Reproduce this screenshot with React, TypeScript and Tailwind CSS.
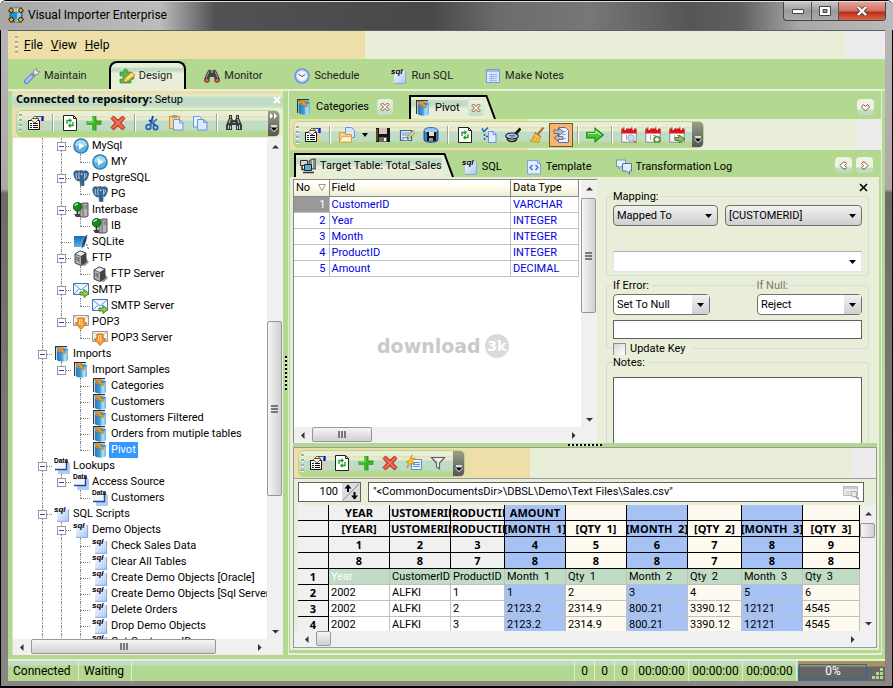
import { useId, useState, type ReactNode } from 'react'
import clsx from 'clsx'

/* ---------- icons ---------- */

function Svg({ children, size = 16 }: { children: ReactNode; size?: number }) {
  return (
    <svg width={size} height={size} viewBox="0 0 16 16" fill="none" className="shrink-0" aria-hidden="true">
      {children}
    </svg>
  )
}

const AppIcon = () => (
  <Svg>
    <path d="M2 3v10c0 3 12 3 12 0V3z" fill="#2490cc" stroke="#0d4d78" strokeWidth=".8" />
    <path d="M9 4h4v10l-4 1z" fill="#8ed2f0" />
    <ellipse cx="8" cy="3" rx="6" ry="2.200" fill="#b9e6f8" stroke="#0d4d78" strokeWidth=".6" />
    <path d="M3 .5L5.500 3 4 6 .5 4zM13 .5L10.500 3 12 6l3.500-2zM.5 12L4 10l2 3-3 2.500zM15.500 12L12 10l-2 3 3 2.500z" fill="#f3a024" stroke="#111" strokeWidth=".9" />
    <path d="M8 1v4M8 12v4" stroke="#f3a024" strokeWidth="1.600" />
  </Svg>
)
const WrenchIcon = () => (
  <Svg>
    <path d="M2.500 13.500l6-6" stroke="#5f86d8" strokeWidth="5" strokeLinecap="round" />
    <path d="M2.700 13.300l5.500-5.500" stroke="#a9c4f5" strokeWidth="3" strokeLinecap="round" />
    <path d="M8 8l3-3" stroke="#8c8f96" strokeWidth="2.400" />
    <path d="M9.500 6V2.600L12.600.6l.2 2.600 2.800.3-2 3-3.200.4z" fill="#e4e6ea" stroke="#7c8088" strokeWidth=".8" />
  </Svg>
)
const DesignIcon = () => (
  <Svg>
    <path d="M1 4h4c-1-2 0-3 1.500-3S9 2 8 4h4v4c2-1 3 0 3 1.500s-1 2.500-3 1.500v4H1v-4c2 1 3-.5 3-1.500S3 7 1 8z" fill="#56b843" stroke="#2f8a2b" strokeWidth=".7" />
    <path d="M5 14l1-4 7-6 3 3-7 6z" fill="#fbd162" stroke="#c9821b" strokeWidth=".8" />
    <path d="M5 14l1-4 2.600 3z" fill="#fff3d0" stroke="#c9821b" strokeWidth=".6" />
    <path d="M7.500 11l6-5.200" stroke="#fff0b4" />
  </Svg>
)
const MonitorIcon = () => (
  <Svg>
    <path d="M4 2.500L6 1.500l1.500 1V5h1V2.500l1.500-1 2 1L15.500 10v3l-4 1-1.500-5h-4L4.500 14l-4-1v-3z" fill="#434345" />
    <path d="M5 3.500l-3 7M11 3.500l3 7" stroke="#97979a" />
    <ellipse cx="3" cy="12.500" rx="2.400" ry="2" fill="#e23a32" stroke="#333" strokeWidth=".6" />
    <ellipse cx="13" cy="12.500" rx="2.400" ry="2" fill="#e23a32" stroke="#333" strokeWidth=".6" />
    <path d="M2 12h1.500M12.500 12H14" stroke="#ffb0a8" />
  </Svg>
)
const ClockIcon = () => (
  <Svg>
    <circle cx="8" cy="8" r="6.800" fill="#fff" stroke="#6d97e8" strokeWidth="2" />
    <circle cx="8" cy="8" r="5" fill="#f3f6fb" stroke="#c3d3f2" strokeWidth=".8" />
    <path d="M4.500 6.200L8 8.500l3.200-2" stroke="#555" />
  </Svg>
)
const SqlIcon = () => (
  <Svg>
    <defs>
      <linearGradient id="sqlPage" x1="0" y1="0" x2="1" y2="1">
        <stop offset="0" stopColor="#f6faff" />
        <stop offset="1" stopColor="#a9c6f2" />
      </linearGradient>
    </defs>
    <path d="M3 3h12v12.500H3z" fill="url(#sqlPage)" />
    <path d="M14.600 3v12.400H3" stroke="#7f9ccc" strokeWidth=".8" />
    <text x="0" y="5.500" fontSize="8" fontWeight="700" fontStyle="italic" fill="#000" fontFamily="'Liberation Sans', sans-serif">sql</text>
  </Svg>
)
const NotesIcon = () => (
  <Svg>
    <path d="M1.500 1.500h13v13h-13z" fill="#dbe8fb" stroke="#6f9be0" />
    <path d="M2 2h12v2H2z" fill="#9dbdf0" />
    <path d="M4 6.500h8M4 8.500h8M4 10.500h8M4 12.500h8M6.500 5v9" stroke="#9ab9ea" />
  </Svg>
)
const ImportIcon = () => (
  <Svg>
    <defs>
      <linearGradient id="drum" x1="0" y1="0" x2="1" y2="0">
        <stop offset="0" stopColor="#2679bd" />
        <stop offset=".45" stopColor="#3f9ed8" />
        <stop offset=".7" stopColor="#b4e2f6" />
        <stop offset="1" stopColor="#6cb8e2" />
      </linearGradient>
    </defs>
    <path d="M1.600 14V.6H13" stroke="#333" strokeWidth="1.200" />
    <path d="M3 4v10c1 2.200 10 2.200 11 0V4z" fill="url(#drum)" />
    <ellipse cx="8.500" cy="3.800" rx="5.600" ry="1.900" fill="#3b8fcb" stroke="#8fd0ee" strokeWidth=".6" />
    <path d="M3 1.500l3.500.5L8 1.500 9.500 4l2 3-1.500 1-1.500-1.500H6.500L7 5 4.500 4z" fill="#f59a1e" stroke="#a85808" strokeWidth=".5" />
  </Svg>
)
const PropsIcon = () => (
  <Svg>
    <path d="M.5 5.500h11v9H.5z" fill="#fff" stroke="#111" />
    <path d="M2 8.500h2M2 10.500h2M2 12.500h2M5 8.500h5M5 10.500h5M5 12.500h5" stroke="#111" />
    <path d="M3 5l4-4 4 3-4 4z" fill="#f7efd0" stroke="#444" strokeWidth=".8" />
    <path d="M8 1.500h5M5 3.500h5" stroke="#555" />
    <path d="M14.500 1v5" stroke="#1818d8" strokeWidth="2.400" />
    <path d="M13.500 7v7" stroke="#f0c890" strokeWidth="2.200" />
  </Svg>
)
const RefreshIcon = () => (
  <Svg>
    <path d="M1.500.5h10l3 3v12h-13z" fill="#fff" stroke="#222" />
    <path d="M11.500.5v3h3" stroke="#222" />
    <path d="M5 9V5.500h3M11 7v3.500H8" stroke="#159a1e" strokeWidth="1.300" />
    <path d="M7.500 3v5L10 5.500zM8.500 8v5L6 10.500z" fill="#159a1e" />
  </Svg>
)
const PlusIcon = () => (
  <Svg>
    <path d="M6 1h4v5h5.500v4H10v5.500H6V10H.5V6H6z" fill="#41b329" />
    <path d="M7 2v5H1.500" stroke="#8fe070" />
    <path d="M10 1.500V6h5.500M10 10v5.500" stroke="#1e7e14" strokeWidth=".8" />
  </Svg>
)
const CrossIcon = () => (
  <Svg>
    <path d="M1 3.500L3.500 1 8 5l4.500-4L15 3.500 11 8l4 4.500-2.500 2.500L8 11l-4.500 4L1 12.500 5 8z" fill="#e2553f" stroke="#b12e1c" strokeWidth=".9" />
    <path d="M3 3l10 10M13 3L3 13" stroke="#f08f7c" strokeWidth=".8" />
  </Svg>
)
const CutIcon = () => (
  <Svg>
    <path d="M9 1L6.500 10M5 5l7 6" stroke="#174f9e" strokeWidth="2" />
    <path d="M13 4L6 10" stroke="#3b78c6" strokeWidth="2" />
    <circle cx="4.500" cy="12" r="2.300" stroke="#2463b8" strokeWidth="1.800" />
    <circle cx="11.500" cy="12.500" r="2.200" stroke="#2463b8" strokeWidth="1.800" />
  </Svg>
)
const PasteIcon = () => (
  <Svg>
    <path d="M1.500 1.500h10v12h-10z" fill="#f8d48a" stroke="#d29335" />
    <path d="M4 0h5v3H4z" fill="#b9a06a" />
    <path d="M5.500 4.500h6L15 7.500v7.500H5.500z" fill="#e4efff" stroke="#6a94dc" />
    <path d="M11.500 4.500V8H15" stroke="#6a94dc" />
  </Svg>
)
const CopyIcon = () => (
  <Svg>
    <path d="M1.500 1.500h6l2.500 2.500v8H1.500z" fill="#edf4ff" stroke="#6a94dc" />
    <path d="M5.500 4.500h6L15 7v8H5.500z" fill="#dce9ff" stroke="#6a94dc" />
    <path d="M11.500 4.500v3H15" stroke="#6a94dc" />
  </Svg>
)
const FindIcon = () => (
  <Svg>
    <path d="M3 0h3v3l1 2h2l1-2V0h3v3l3 7v5h-6v-5H6v5H0v-5l3-7z" fill="#3c3c3c" />
    <path d="M2.500 10v4M4.500 11v3M11.500 11v3M13.500 10v4M4.500 4L3 8M11.500 4L13 8" stroke="#c8c8c8" />
    <path d="M4.500 1v2M11.500 1v2M7 7.500h2" stroke="#aaa" />
  </Svg>
)
const OpenIcon = () => (
  <Svg>
    <path d="M6.500.5h6l3 3v7h-9z" fill="#d8e7fd" stroke="#6a94dc" />
    <path d="M.5 5.500h5l1 2h6v7.500H.5z" fill="#f8cf86" stroke="#dc9a3c" />
    <path d="M3 9.500h9.500V15H.5z" fill="#fff2d4" stroke="#dc9a3c" strokeWidth=".8" />
  </Svg>
)
const SaveIcon = () => (
  <Svg>
    <path d="M1 1h14v14H1z" fill="#151515" />
    <path d="M4 1h8v6H4z" fill="#d8c8b8" />
    <path d="M2 2v12" stroke="#a07c28" />
    <path d="M4 10h8v5H4z" fill="#6a6a6a" />
    <path d="M9 11h2v3H9z" fill="#fff" />
  </Svg>
)
const SaveAsIcon = () => (
  <Svg>
    <path d="M1.500 3.500h11v10h-11z" fill="#e2ecf8" stroke="#3b6496" strokeWidth="1.200" />
    <path d="M3 6h8M3 8h6M4 10.500h5v3H4z" stroke="#6b90bc" />
    <path d="M8 12l1-3 5-5.500 2 2-5.500 5.500z" fill="#fbdc74" stroke="#6c6c38" strokeWidth=".8" />
  </Svg>
)
const SaveDbIcon = () => (
  <Svg>
    <path d="M1 4v9c0 3 14 3 14 0V4z" fill="#3c7fd0" stroke="#143c78" strokeWidth=".8" />
    <ellipse cx="8" cy="3.500" rx="7" ry="3" fill="#9cc6f4" stroke="#1d5298" strokeWidth=".8" />
    <path d="M4 5h9v9H4z" fill="#111" />
    <path d="M6 5h5v4H6z" fill="#e8dfc8" />
    <path d="M6 11h4v3H6z" fill="#999" />
  </Svg>
)
const ChecksIcon = () => (
  <Svg>
    <path d="M1 1.500l2 3 4-4M3.500 7v2M3.500 11v2M5 9.500h2" stroke="#1d5fc0" strokeWidth="1.500" />
    <path d="M7.500 4.500h5L15 7v8.500H7.500z" fill="#e0ebff" stroke="#6a94dc" />
    <path d="M12 4.500v3h3" stroke="#6a94dc" />
  </Svg>
)
const PanIcon = () => (
  <Svg>
    <path d="M10 7.500l5.500-6" stroke="#111" strokeWidth="2.600" />
    <ellipse cx="7" cy="9" rx="6.300" ry="3" fill="#b9c6e8" stroke="#222" strokeWidth="1.200" />
    <path d="M2 11.500c1 4 9 4 10 0" stroke="#222" strokeWidth="1.400" />
    <path d="M4 8.500h6M5 10h5" stroke="#5a6eb0" />
  </Svg>
)
const BroomIcon = () => (
  <Svg>
    <path d="M14.500.5L9 7" stroke="#b06a2c" strokeWidth="2" />
    <path d="M6 5.500l5.500 4-2 6L1 14c2-2 4.500-5 5-8.500z" fill="#f8ca4c" stroke="#bd821c" strokeWidth=".8" />
    <path d="M6.500 9l-3 4.500M8.500 10l-2 4.500" stroke="#c98e20" strokeWidth=".8" />
    <path d="M6 5.500l5.500 4" stroke="#c8402a" />
  </Svg>
)
const PageArrowsIcon = () => (
  <Svg>
    <path d="M5.500.5h7l3 3v12h-10z" fill="#e8f1fd" stroke="#4a79b6" />
    <path d="M8 4.500h5M9 7.500h4M8 11.500h5" stroke="#87a8d6" />
    <path d="M1 3h5V1l4.500 4L6 8.500V6.500H1z" fill="#b7bcc8" stroke="#58606e" strokeWidth=".8" />
    <path d="M10 9.500H5V8L1 11l4 3v-1.500h5z" fill="#b7bcc8" stroke="#58606e" strokeWidth=".8" />
  </Svg>
)
const GoIcon = () => (
  <Svg size={18}>
    <path d="M.6 5.500h7.400V2L15.400 8 8 14v-3.500H.6z" fill="#4cc433" stroke="#1c8a16" />
    <path d="M1.500 6.700h7.300V4.500l4.300 3.500" stroke="#b2f09a" />
  </Svg>
)
function CalendarIcon({ badge }: { badge: 'find' | 'add' | 'go' }) {
  return (
    <Svg>
      <path d="M.8 2.500h14.400v12.700H.8z" fill="#fafafa" stroke="#777" strokeWidth=".8" />
      <path d="M.5 1.500h15v5H.5z" fill="#e0121c" />
      <path d="M4 0v3M12 0v3" stroke="#fff" strokeWidth="2" />
      <path d="M3 0v3M11 0v3" stroke="#333" strokeWidth=".8" />
      <path d="M5.500 8v5M8 8.500h2.500L8.500 13" stroke="#aaa" />
      {badge === 'find' && (
        <>
          <circle cx="10" cy="11" r="3.200" fill="#c5def8" stroke="#8fb0d8" />
          <path d="M12.500 13.500l3 2.500" stroke="#b06a4a" strokeWidth="1.600" />
        </>
      )}
      {badge === 'add' && (
        <>
          <circle cx="12" cy="12.500" r="3.300" fill="#6aab4a" stroke="#4c7f32" strokeWidth=".8" />
          <path d="M12 10.500v4M10 12.500h4" stroke="#fff" strokeWidth="1.300" />
        </>
      )}
      {badge === 'go' && <path d="M6 10.500h4V8l6 4-6 4v-2.500H6z" fill="#86c060" stroke="#3d7a22" strokeWidth=".9" />}
    </Svg>
  )
}
const QuickListIcon = () => (
  <Svg>
    <path d="M5.500 4.500h10v10h-10z" fill="#e9f2ff" stroke="#5e8fc8" />
    <path d="M7 7.500h7M7 9.500h7M7 11.500h7" stroke="#5e8fc8" strokeWidth="1.200" />
    <path d="M6 0L5 4l4-1-3 4 3 2-4-.5L1 13l1.500-5L0 7l3-1z" fill="#ffc832" stroke="#c78410" strokeWidth=".7" />
  </Svg>
)
const FilterIcon = () => (
  <Svg>
    <path d="M1.500 2.500h13L9.500 8v6l-3-2V8z" fill="#f0f2f2" stroke="#5a5f66" strokeWidth="1.200" />
    <path d="M4 3.500l4 4" stroke="#c0c4c8" />
  </Svg>
)
const TargetIcon = () => (
  <Svg>
    <path d="M.5 2.500h7v5h-7z" fill="#d5d5d5" stroke="#333" />
    <path d="M9 3l3-2h4v10h-4l-3-1z" fill="#8f8f8f" stroke="#333" strokeWidth=".8" />
    <path d="M12.500 2v8" stroke="#ddd" />
    <path d="M4.500 6.500h7v6h-7z" fill="#5cb0d8" stroke="#222" />
    <path d="M2 8v3.500h2M3 14.500h11" stroke="#333" strokeWidth="1.500" />
  </Svg>
)
const TemplateIcon = () => (
  <Svg>
    <path d="M1.500 1.500h10l3 3v10.500h-13z" fill="#e2eefd" stroke="#7aa5e4" />
    <path d="M11.500 1.500v3h3" stroke="#7aa5e4" />
    <path d="M6.500 6L4 8.500 6.500 11M9.500 6L12 8.500 9.500 11" stroke="#2f74cc" strokeWidth="1.300" />
  </Svg>
)
const LogIcon = () => (
  <Svg>
    <path d="M.5 1h9v6.500H5L3 10V7.500H.5z" fill="#eef4fe" stroke="#6f8fc8" />
    <path d="M6.500 4.500h9V12h-2v3.200L10.500 12h-4z" fill="#dfeafc" stroke="#4f74b8" />
  </Svg>
)
const MySqlIcon = () => (
  <Svg>
    <circle cx="8" cy="8" r="7.800" fill="#2c7db2" />
    <circle cx="8" cy="8" r="6.400" fill="#62b0dc" />
    <path d="M2 7.500a6 5.500 0 0112 0c-3 1.500-9 1.500-12 0z" fill="#a8d8f0" />
    <path d="M6 4.500v7L11.500 8z" fill="#fff" />
  </Svg>
)
const PostgresIcon = () => (
  <Svg>
    <path d="M.8 3C1.500-.2 5 .6 6 1.200c1.500-1 3-.7 4 0 2-1 5-.7 5.500 1.800.3 2.500-1 5-2.500 7.500l-2-.5v5.500H7.500L7 10.500C4 12.500.5 7.500.8 3z" fill="#336590" stroke="#1f4a70" strokeWidth=".6" />
    <path d="M3.500 3c-1 2.500 0 5 .8 6M6.500 2.500c-1.500 2-.5 4-.2 6.500M11 3c1.500 2 0 4 .3 6M13 3.500c1 1.500 0 3-.5 4" stroke="#e2edf6" strokeWidth=".8" />
    <circle cx="8.700" cy="4.200" r=".8" fill="#fff" />
  </Svg>
)
const InterbaseIcon = () => (
  <Svg>
    <path d="M7 2l3-1h5v13l-2 1H7z" fill="#b4b4b4" stroke="#333" strokeWidth=".8" />
    <path d="M10 1.500V15M11.500 4h3M11.500 6h3" stroke="#666" />
    <path d="M1 12h6v3H3z" fill="#444" />
    <path d="M4.500 8v5" stroke="#333" strokeWidth="1.600" />
    <circle cx="4.500" cy="4.800" r="4.300" fill="#128a1c" stroke="#06420c" strokeWidth=".8" />
    <path d="M2 4a2.500 2.500 0 013-2" stroke="#b8f0a8" strokeWidth="1.500" />
  </Svg>
)
const SqliteIcon = () => (
  <Svg>
    <defs>
      <linearGradient id="sqlite" x1="0" y1="0" x2="0" y2="1">
        <stop offset="0" stopColor="#0f6db4" />
        <stop offset="1" stopColor="#5cb2ea" />
      </linearGradient>
    </defs>
    <path d="M1 2h11v11H1z" fill="url(#sqlite)" />
    <path d="M14.500.5C11 2 8.500 7 8.500 15.500c1.500-3 5-4.500 6-15z" fill="#173f66" stroke="#e8f2fa" strokeWidth=".5" />
    <path d="M13 10l1.500 2M14.500 13l1 2" stroke="#35608a" />
  </Svg>
)
const FtpIcon = () => (
  <Svg>
    <path d="M10 4l6 8-4 4-4-1z" fill="#999" />
    <path d="M2 4l5-3 6 2v9l-5 3.500L2 13z" fill="#b2b2b2" stroke="#222" strokeWidth=".8" />
    <path d="M2 4l6 2.500L13 3 7 1z" fill="#ececec" stroke="#222" strokeWidth=".6" />
    <path d="M8 6.500l5-3.500v9l-5 3.500z" fill="#444" />
    <path d="M3.500 7.500l3 1M3.500 9.500l3 1" stroke="#444" />
    <path d="M6 11.500v1" stroke="#e02020" />
  </Svg>
)
const SmtpIcon = () => (
  <Svg>
    <path d="M.5 1.500h15v11H.5z" fill="#eff6ff" stroke="#3e78b8" />
    <path d="M1 2l7 6 7-6M1 12l5-5M15 12l-5-5" stroke="#5f97d2" />
    <path d="M7 10h4V7.500l5 4-5 4V13H7z" fill="#8ccc5a" stroke="#3b7e1c" strokeWidth=".9" />
  </Svg>
)
const Pop3Icon = () => (
  <Svg>
    <path d="M.5 1.500h15v10H.5z" fill="#f5f2ec" stroke="#999" />
    <path d="M1 2l5 4M15 2l-5 4M1 11l4-4M15 11l-4-4" stroke="#bbb" />
    <path d="M5 4h6v5h3l-6 6.500L2 9h3z" fill="#f8a030" stroke="#c86a10" strokeWidth=".9" />
    <path d="M6.500 5v5M8.500 5v6" stroke="#ffd08a" />
  </Svg>
)
const LookupIcon = () => (
  <Svg>
    <path d="M4 5h12v11H4z" fill="#b4ccf2" />
    <path d="M1 3h11.500v8H1z" fill="#f2f7ff" />
    <path d="M1 11.500h11.500V3" stroke="#20489c" strokeWidth="1.400" />
    <text x="0" y="5" fontSize="6.500" fontWeight="700" fill="#000" fontFamily="'Liberation Sans', sans-serif">Data</text>
  </Svg>
)
const BrowseIcon = () => (
  <Svg>
    <path d="M.5 2.500h14v9H.5z" fill="#eee" stroke="#b8b8b8" />
    <path d="M1 3h13v2H1z" fill="#ccc" />
    <path d="M2.500 7.500h6M2.500 9.500h4" stroke="#c4c4c4" />
    <circle cx="11" cy="10" r="3" fill="#e8e8e8" stroke="#aaa" />
    <path d="M13 12.500l3 3" stroke="#999" strokeWidth="1.800" />
  </Svg>
)

/* ---------- toolbars ---------- */

const stripe =
  'bg-[linear-gradient(#e8eed8_0,#e8eed8_5px,#eedfa8_5px,#eedfa8_6px,#e4ecd4_7px,#e0ead2_9px,#c1dcc4_10px,#c1dcc4_18px,#b3d88f_21px)]'

const boldFont = "[font-family:'Noto_Sans',sans-serif]"

const Grip = () => (
  <span className="h-[18px] w-[3px] shrink-0 bg-[repeating-linear-gradient(#a8ac9c_0,#a8ac9c_2px,#f4f6ec_2px,#f4f6ec_3px,transparent_3px,transparent_5px)]" />
)

const Sep = () => (
  <span className="flex w-2.5 shrink-0 justify-center">
    <span className="h-[18px] w-0.5 border-l border-[#9aa890] bg-white" />
  </span>
)

function ToolButton({ label, active, children }: { label: string; active?: boolean; children: ReactNode }) {
  return (
    <button
      type="button"
      title={label}
      aria-label={label}
      className={clsx(
        'flex h-6 w-6 shrink-0 items-center justify-center',
        active && 'border border-[#6a5a3c] bg-[#fbb46a]',
      )}
    >
      {children}
    </button>
  )
}

function Toolbar({ children, wide, double }: { children: ReactNode; wide?: boolean; double?: boolean }) {
  return (
    <div
      className={clsx(
        'flex h-[27px] items-center rounded-md border border-[#b3d88f] pl-0.5',
        stripe,
        wide && 'min-w-0 flex-1',
      )}
    >
      <Grip />
      <div className={clsx('flex items-center pl-0.5', wide && 'flex-1')}>{children}</div>
      <button
        type="button"
        aria-label="Toolbar options"
        className="ml-[3px] flex h-[25px] w-[11px] flex-col items-center justify-end rounded-r bg-gradient-to-b from-[#9aa088] to-[#555] pb-1"
      >
        {double && (
          <svg width="8" height="6" viewBox="0 0 8 6" className="mb-1.5" aria-hidden="true">
            <path d="M0 0l3 3-3 3zM4 0l3 3-3 3z" fill="#fff" />
          </svg>
        )}
        <svg width="8" height="7" viewBox="0 0 8 7" aria-hidden="true">
          <path d="M1 1h6" stroke="#fff" strokeWidth="1.500" />
          <path d="M0 3h8L4 7z" fill="#fff" />
          <path d="M1 3h6L4 6z" fill="#000" />
        </svg>
      </button>
    </div>
  )
}

/* ---------- scroll bars ---------- */

type Dir = 'up' | 'down' | 'left' | 'right'

const arrowPaths: Record<Dir, string> = {
  up: 'M0 5.500L3.500 2 7 5.500z',
  down: 'M0 2l3.500 3.500L7 2z',
  left: 'M5.500 0L2 3.500 5.500 7z',
  right: 'M2 0l3.500 3.500L2 7z',
}

function ScrollArrow({ dir }: { dir: Dir }) {
  return (
    <button type="button" aria-label={`Scroll ${dir}`} className="flex h-4 w-4 shrink-0 items-center justify-center">
      <svg width="7" height="7" viewBox="0 0 7 7" aria-hidden="true">
        <path d={arrowPaths[dir]} fill="#333" />
      </svg>
    </button>
  )
}

function VScroll({ before, thumb, mark = true }: { before: string; thumb: string; mark?: boolean }) {
  return (
    <div className="flex w-4 shrink-0 flex-col bg-[#f0f0f0]">
      <ScrollArrow dir="up" />
      <div className="flex min-h-0 flex-1 flex-col">
        <div className={before} />
        <div
          className={clsx(
            'flex w-[15px] shrink-0 flex-col items-center justify-center gap-px rounded-xs border border-[#979797] bg-gradient-to-r from-[#f6f6f6] to-[#d0d0d2]',
            thumb,
          )}
        >
          {mark && (
            <>
              <span className="h-0.5 w-[7px] bg-[#777]" />
              <span className="h-0.5 w-[7px] bg-[#777]" />
              <span className="h-0.5 w-[7px] bg-[#777]" />
            </>
          )}
        </div>
      </div>
      <ScrollArrow dir="down" />
    </div>
  )
}

function HScroll({ before, thumb, mark = true }: { before: string; thumb: string; mark?: boolean }) {
  return (
    <div className="flex h-4 min-w-0 flex-1 bg-[#f0f0f0]">
      <ScrollArrow dir="left" />
      <div className="flex min-w-0 flex-1">
        <div className={before} />
        <div
          className={clsx(
            'flex h-[15px] shrink-0 items-center justify-center gap-px rounded-xs border border-[#979797] bg-gradient-to-b from-[#f6f6f6] to-[#d0d0d2]',
            thumb,
          )}
        >
          {mark && (
            <>
              <span className="h-[7px] w-0.5 bg-[#777]" />
              <span className="h-[7px] w-0.5 bg-[#777]" />
              <span className="h-[7px] w-0.5 bg-[#777]" />
            </>
          )}
        </div>
      </div>
      <ScrollArrow dir="right" />
    </div>
  )
}

/* ---------- repository tree ---------- */

type Node = { depth: number; label: string; icon: () => ReactNode; leaf?: boolean }

const nodes: Node[] = [
  { depth: 1, label: 'MySql', icon: MySqlIcon },
  { depth: 2, label: 'MY', icon: MySqlIcon, leaf: true },
  { depth: 1, label: 'PostgreSQL', icon: PostgresIcon },
  { depth: 2, label: 'PG', icon: PostgresIcon, leaf: true },
  { depth: 1, label: 'Interbase', icon: InterbaseIcon },
  { depth: 2, label: 'IB', icon: InterbaseIcon, leaf: true },
  { depth: 1, label: 'SQLite', icon: SqliteIcon, leaf: true },
  { depth: 1, label: 'FTP', icon: FtpIcon },
  { depth: 2, label: 'FTP Server', icon: FtpIcon, leaf: true },
  { depth: 1, label: 'SMTP', icon: SmtpIcon },
  { depth: 2, label: 'SMTP Server', icon: SmtpIcon, leaf: true },
  { depth: 1, label: 'POP3', icon: Pop3Icon },
  { depth: 2, label: 'POP3 Server', icon: Pop3Icon, leaf: true },
  { depth: 0, label: 'Imports', icon: ImportIcon },
  { depth: 1, label: 'Import Samples', icon: ImportIcon },
  { depth: 2, label: 'Categories', icon: ImportIcon, leaf: true },
  { depth: 2, label: 'Customers', icon: ImportIcon, leaf: true },
  { depth: 2, label: 'Customers Filtered', icon: ImportIcon, leaf: true },
  { depth: 2, label: 'Orders from mutiple tables', icon: ImportIcon, leaf: true },
  { depth: 2, label: 'Pivot', icon: ImportIcon, leaf: true },
  { depth: 0, label: 'Lookups', icon: LookupIcon },
  { depth: 1, label: 'Access Source', icon: LookupIcon },
  { depth: 2, label: 'Customers', icon: LookupIcon, leaf: true },
  { depth: 0, label: 'SQL Scripts', icon: SqlIcon },
  { depth: 1, label: 'Demo Objects', icon: SqlIcon },
  { depth: 2, label: 'Check Sales Data', icon: SqlIcon, leaf: true },
  { depth: 2, label: 'Clear All Tables', icon: SqlIcon, leaf: true },
  { depth: 2, label: 'Create Demo Objects [Oracle]', icon: SqlIcon, leaf: true },
  { depth: 2, label: 'Create Demo Objects [Sql Server]', icon: SqlIcon, leaf: true },
  { depth: 2, label: 'Delete Orders', icon: SqlIcon, leaf: true },
  { depth: 2, label: 'Drop Demo Objects', icon: SqlIcon, leaf: true },
  { depth: 2, label: 'Get Customer ID', icon: SqlIcon, leaf: true },
]

// true when another sibling at this depth follows further down
function continues(index: number, depth: number) {
  for (let j = index + 1; j < nodes.length; j++) {
    if (nodes[j].depth < depth) return false
    if (nodes[j].depth === depth) return true
  }
  return true
}

function Guide({ own, leaf, down }: { own: boolean; leaf?: boolean; down: boolean }) {
  return (
    <span className="grid h-4 w-[19px] shrink-0 grid-cols-[9px_10px] grid-rows-2">
      <span />
      <span className={clsx('border-dotted border-[#888]', (own || down) && 'border-l')} />
      <span />
      <span className={clsx('border-dotted border-[#888]', down && 'border-l', own && 'border-t')} />
      {own && !leaf && (
        <span className="col-span-2 -mt-3 ml-[5px] flex h-[9px] w-[9px] items-center justify-center border border-[#989898] bg-white">
          <span className="h-px w-[5px] bg-[#2a50b8]" />
        </span>
      )}
    </span>
  )
}

function Tree() {
  const [selected, setSelected] = useState('Pivot')
  return (
    <ul className="min-h-0 min-w-0 flex-1 overflow-hidden bg-white pl-5">
      {nodes.map((n, i) => {
        const Icon = n.icon
        return (
          <li key={i} className="flex h-4 items-center">
            {Array.from({ length: n.depth + 1 }, (_, c) => (
              <Guide key={c} own={c === n.depth} leaf={n.leaf} down={continues(i, c)} />
            ))}
            <button type="button" onClick={() => setSelected(n.label)} className="flex h-4 items-center whitespace-nowrap pl-0.5">
              <Icon />
              <span className={clsx('ml-px h-4 px-0.5 leading-4', selected === n.label && 'bg-[#3399ff] text-white')}>
                {n.label}
              </span>
            </button>
          </li>
        )
      })}
    </ul>
  )
}

function RepositoryPane() {
  return (
    <section className="flex w-[271px] shrink-0 flex-col border-l border-[#d8dcd0]">
      <header className="flex h-[17px] items-center justify-between bg-[linear-gradient(#eedfa8_0,#eedfa8_3px,#e2ecd4_4px,#c1dcc4_7px,#c1dcc4_14px,#d4e6c8_17px)] pl-[3px]">
        <span>
          <b className={boldFont}>Connected to repository:</b> Setup
        </span>
        <button type="button" aria-label="Close pane" className="flex h-3 w-3 items-center justify-center">
          <svg width="8" height="8" viewBox="0 0 8 8" aria-hidden="true">
            <path d="M1 1l6 6M7 1L1 7" stroke="#fff" strokeWidth="2" />
          </svg>
        </button>
      </header>
      <div className="flex h-[30px] items-center bg-[linear-gradient(90deg,#eedfa8_110px,#e8eed8_110px)] px-[3px]">
        <Toolbar wide double>
          <ToolButton label="Properties"><PropsIcon /></ToolButton>
          <Sep />
          <ToolButton label="Refresh"><RefreshIcon /></ToolButton>
          <ToolButton label="Add"><PlusIcon /></ToolButton>
          <ToolButton label="Delete"><CrossIcon /></ToolButton>
          <Sep />
          <ToolButton label="Cut"><CutIcon /></ToolButton>
          <ToolButton label="Paste"><PasteIcon /></ToolButton>
          <ToolButton label="Copy"><CopyIcon /></ToolButton>
          <Sep />
          <ToolButton label="Find"><FindIcon /></ToolButton>
        </Toolbar>
      </div>
      <div className="flex min-h-0 flex-1">
        <Tree />
        <VScroll before="h-[167px] shrink-0" thumb="h-[175px]" />
      </div>
      <div className="flex bg-[#f0f0f0] pr-4">
        <HScroll before="w-0.5" thumb="w-[185px]" />
      </div>
    </section>
  )
}

/* ---------- tabs ---------- */

// selected tab with a slanted right edge
function SlantTab({ children }: { children: ReactNode }) {
  return (
    <div className="flex h-6">
      <div className="flex items-center border-l-2 border-t-2 border-black bg-[linear-gradient(#e8eed8_2px,#c1dcc4_4px,#c1dcc4_8px,#e8eed8_12px)] pl-1">
        {children}
      </div>
      <svg width="12" height="24" viewBox="0 0 12 24" aria-hidden="true">
        <path d="M0 1h3l8 23H0z" fill="#e4ecd5" />
        <path d="M0 1h2.500l8.500 23" fill="none" stroke="#000" strokeWidth="2" />
      </svg>
    </div>
  )
}

function CloseTab({ label }: { label: string }) {
  return (
    <button
      type="button"
      aria-label={label}
      className="flex h-4 w-4 items-center justify-center rounded bg-gradient-to-b from-[#eef2e4] to-[#c1dcc4]"
    >
      <svg width="10" height="10" viewBox="0 0 10 10" aria-hidden="true">
        <path d="M1 2.500L2.500 1 5 3.500 7.500 1 9 2.500 6.500 5 9 7.500 7.500 9 5 6.500 2.500 9 1 7.500 3.500 5z" fill="#fff" stroke="#85511c" />
      </svg>
    </button>
  )
}

const mainTabs = [
  { label: 'Maintain', icon: WrenchIcon },
  { label: 'Design', icon: DesignIcon },
  { label: 'Monitor', icon: MonitorIcon },
  { label: 'Schedule', icon: ClockIcon },
  { label: 'Run SQL', icon: SqlIcon },
  { label: 'Make Notes', icon: NotesIcon },
]

function MainTabs() {
  const [tab, setTab] = useState('Design')
  return (
    <nav className="flex h-[30px] shrink-0 items-end pl-0.5">
      {mainTabs.map(({ label, icon: Icon }) => (
        <button
          key={label}
          type="button"
          onClick={() => setTab(label)}
          className={clsx(
            'mx-1 flex h-7 items-center gap-1 rounded-t-lg border-2 border-b-0 pl-2 pr-3',
            tab === label
              ? 'border-black bg-[linear-gradient(#e8eed8_4px,#c1dcc4_5px,#c1dcc4_8px,#e8eed8_10px)]'
              : 'border-transparent',
          )}
        >
          <Icon />
          <span className="whitespace-nowrap text-[#222]">{label}</span>
        </button>
      ))}
    </nav>
  )
}

/* ---------- target table + mapping form ---------- */

const fields = [
  ['CustomerID', 'VARCHAR'],
  ['Year', 'INTEGER'],
  ['Month', 'INTEGER'],
  ['ProductID', 'INTEGER'],
  ['Amount', 'DECIMAL'],
]

const headCell = 'h-4 border-b border-r border-[#888] bg-gradient-to-b from-white via-[#fffbe8] to-[#e8eed8] p-0 pl-0.5 text-left font-normal'

function FieldTable() {
  return (
    <table className="w-full table-fixed border-collapse leading-[15px]">
      <colgroup>
        <col className="w-[35px]" />
        <col />
        <col className="w-[68px]" />
      </colgroup>
      <thead>
        <tr>
          <th className={headCell}>
            <span className="flex items-center gap-2">
              No
              <svg width="8" height="7" viewBox="0 0 8 7" aria-hidden="true">
                <path d="M.5.5h7L4 6.500z" fill="#fff" stroke="#999" />
              </svg>
            </span>
          </th>
          <th className={headCell}>Field</th>
          <th className={headCell}>Data Type</th>
        </tr>
      </thead>
      <tbody className="text-[#0000e0]">
        {fields.map(([name, type], i) => (
          <tr key={name} className="h-4">
            <td className={clsx('border border-l-0 border-[#c0c0c0] p-0 pr-[3px] text-right', i === 0 && 'bg-[#999] text-white')}>
              {i + 1}
            </td>
            <td className="border border-[#c0c0c0] p-0 pl-0.5">{name}</td>
            <td className="border border-[#c0c0c0] p-0 pl-0.5">{type}</td>
          </tr>
        ))}
      </tbody>
    </table>
  )
}

type DropProps = { label: string; options: string[]; look: 'button' | 'split' | 'plain'; className: string; id?: string }

function Drop({ label, options, look, className, id }: DropProps) {
  return (
    <div className={clsx('relative h-[21px]', className)}>
      <select
        id={id}
        aria-label={id ? undefined : label}
        className={clsx(
          'h-full w-full appearance-none pl-[3px] pr-5 leading-4 outline-none',
          look === 'button' && 'rounded-sm border border-[#707070] bg-gradient-to-b from-[#f2f2f2] to-[#cfcfcf]',
          look === 'split' && 'rounded-sm border border-[#707070] bg-white',
          look === 'plain' && 'border border-[#e2e3ea] border-t-[#abadb3] bg-white',
        )}
      >
        {options.map((o) => (
          <option key={o}>{o}</option>
        ))}
      </select>
      <span
        className={clsx(
          'pointer-events-none absolute inset-y-px right-px flex w-[17px] items-center justify-center',
          look === 'split' && 'bg-gradient-to-b from-[#f2f2f2] to-[#cfcfcf]',
        )}
      >
        <svg width="7" height="4" viewBox="0 0 7 4" aria-hidden="true">
          <path d="M0 0h7L3.500 4z" fill="#000" />
        </svg>
      </span>
    </div>
  )
}

function MappingForm() {
  const id = useId()
  const group = 'rounded border border-[#d8dae2] px-1.5'
  const caption = 'bg-[#e8eed8] leading-4 pr-0.5'
  return (
    <form className="flex w-[280px] shrink-0 flex-col overflow-hidden bg-[#e8eed8] pl-[9px] pr-2">
      <div className="flex h-[17px] shrink-0 justify-end">
        <button type="button" aria-label="Close" className="flex h-4 w-3 items-center justify-center">
          <svg width="9" height="9" viewBox="0 0 9 9" aria-hidden="true">
            <path d="M1 1l7 7M8 1L1 8" stroke="#000" strokeWidth="1.600" />
          </svg>
        </button>
      </div>
      <div className={clsx(group, 'h-20 shrink-0')}>
        <div className="-mt-2 flex h-4">
          <span className={caption}>Mapping:</span>
        </div>
        <div className="flex justify-between">
          <Drop label="Mapping" look="button" className="w-[105px]" options={['Mapped To']} />
          <Drop label="Source column" look="button" className="w-[137px]" options={['[CUSTOMERID]']} />
        </div>
        <Drop label="Expression" look="plain" className="mt-[25px] w-full" options={['']} />
      </div>
      <div className={clsx(group, 'mt-[9px] h-16 shrink-0')}>
        <div className="-mt-2 flex h-4 justify-between">
          <label htmlFor={`${id}e`} className={caption}>If Error:</label>
          <label htmlFor={`${id}n`} className={clsx(caption, 'mr-[72px] text-[#777]')}>If Null:</label>
        </div>
        <div className="flex justify-between">
          <Drop id={`${id}e`} label="If Error" look="split" className="w-[97px]" options={['Set To Null']} />
          <Drop id={`${id}n`} label="If Null" look="split" className="w-[105px]" options={['Reject']} />
        </div>
        <input aria-label="Error value" className="mt-[5px] h-[19px] w-full border border-[#606060] bg-white px-1" />
        <div className="mt-0.5 flex h-4">
          <label className={clsx(caption, 'flex items-center gap-1 pr-2')}>
            <input type="checkbox" className="h-[13px] w-[13px] appearance-none border border-[#8e8f8f] bg-gradient-to-br from-[#d4d6da] to-white" />
            Update Key
          </label>
        </div>
      </div>
      <div className={clsx(group, 'mt-[13px] flex min-h-0 flex-1 flex-col rounded-b-none border-b-0')}>
        <div className="-mt-2 flex h-4 shrink-0">
          <label htmlFor={`${id}t`} className={caption}>Notes:</label>
        </div>
        <textarea id={`${id}t`} className="mt-1.5 min-h-0 flex-1 resize-none border border-b-0 border-[#606060] bg-white outline-none" />
      </div>
    </form>
  )
}

/* ---------- source file preview ---------- */

const columns = [
  { width: 'w-[61px]', tone: 'plain', head: ['YEAR', '[YEAR]', '1', '8'], rows: ['Year', '2002', '2002', '2002'] },
  { width: 'w-[61px]', tone: 'plain', head: ['CUSTOMERID', '[CUSTOMERID]', '2', '8'], rows: ['CustomerID', 'ALFKI', 'ALFKI', 'ALFKI'] },
  { width: 'w-[54px]', tone: 'plain', head: ['PRODUCTID', '[PRODUCTID]', '3', '7'], rows: ['ProductID', '1', '2', '3'] },
  { width: 'w-[61px]', tone: 'blue', head: ['AMOUNT', '[MONTH  1]', '4', '8'], rows: ['Month  1', '1', '2123.2', '2123.2'] },
  { width: 'w-[61px]', tone: 'cream', head: ['', '[QTY  1]', '5', '8'], rows: ['Qty  1', '2', '2314.9', '2314.9'] },
  { width: 'w-[61px]', tone: 'blue', head: ['', '[MONTH  2]', '6', '8'], rows: ['Month  2', '3', '800.21', '800.21'] },
  { width: 'w-[54px]', tone: 'cream', head: ['', '[QTY  2]', '7', '7'], rows: ['Qty  2', '4', '3390.12', '3390.12'] },
  { width: 'w-[61px]', tone: 'blue', head: ['', '[MONTH  3]', '8', '8'], rows: ['Month  3', '5', '12121', '12121'] },
  { width: 'w-auto', tone: 'cream', head: ['', '[QTY  3]', '9', '8'], rows: ['Qty  3', '6', '4545', '4545'] },
]

const headTone: Record<string, string> = { plain: 'bg-[#f0f0f0]', blue: 'bg-[#a6c2f4]', cream: 'bg-[#fffaf0]' }
const cellTone: Record<string, string> = { plain: 'bg-white', blue: 'bg-[#a6c2f4]', cream: 'bg-[#fffaf0]' }

function PreviewTable() {
  return (
    <table className="w-full table-fixed border-separate border-spacing-0 leading-[15px]">
      <colgroup>
        <col className="w-[31px]" />
        {columns.map((c, i) => (
          <col key={i} className={c.width} />
        ))}
      </colgroup>
      <thead className={boldFont}>
        {[0, 1, 2, 3].map((r) => (
          <tr key={r} className="h-4">
            <td className="border-b border-r border-black bg-[#f0f0f0] p-0" />
            {columns.map((c, i) => (
              <th key={i} className={clsx('overflow-hidden border-b border-r border-black p-0', headTone[c.tone])}>
                <span className="flex h-[15px] justify-center overflow-hidden whitespace-pre">{c.head[r]}</span>
              </th>
            ))}
          </tr>
        ))}
      </thead>
      <tbody>
        {[0, 1, 2, 3].map((r) => (
          <tr key={r} className="h-4">
            <th className={clsx('border-b border-r border-black bg-[#f0f0f0] p-0 text-center', boldFont)}>{r + 1}</th>
            {columns.map((c, i) => (
              <td
                key={i}
                className={clsx(
                  'overflow-hidden whitespace-pre border-b border-r border-[#c0c0c0] p-0 pl-0.5',
                  r === 0 ? 'bg-[#c1dcc4]' : cellTone[c.tone],
                  r === 0 && i === 0 && 'text-white',
                )}
              >
                {c.rows[r]}
              </td>
            ))}
          </tr>
        ))}
      </tbody>
    </table>
  )
}

function PreviewPane() {
  return (
    <section className="border border-[#9a9a9a] bg-[#e8eed8]">
      <div className="flex h-[30px] items-center bg-[linear-gradient(90deg,#eedfa8_236px,transparent_236px)]">
        <div className="flex flex-1 pl-1">
          <Toolbar>
            <ToolButton label="Properties"><PropsIcon /></ToolButton>
            <ToolButton label="Refresh"><RefreshIcon /></ToolButton>
            <ToolButton label="Add"><PlusIcon /></ToolButton>
            <ToolButton label="Delete"><CrossIcon /></ToolButton>
            <ToolButton label="Quick view"><QuickListIcon /></ToolButton>
            <ToolButton label="Filter"><FilterIcon /></ToolButton>
          </Toolbar>
        </div>
        <div className="h-full w-6 bg-[#ececec]" />
      </div>
      <div className="flex h-[27px] items-center gap-[7px] border-t border-[#9a9a9a] pl-1 pr-3">
        <div className="flex h-5 w-[63px] shrink-0 border border-[#606060] bg-white">
          <input aria-label="Preview rows" defaultValue="100" className="min-w-0 flex-1 pr-1 text-right outline-none" />
          <button type="button" aria-label="Change row count" className="w-[18px] bg-[#dcdcdc]">
            <svg width="18" height="18" viewBox="0 0 18 18" aria-hidden="true">
              <path d="M1 17L17 1" stroke="#888" />
              <path d="M6 2v7M12.500 9v7" stroke="#000" strokeWidth="2" />
              <path d="M2.500 5.500L6 1.500l3.500 4zM9 12.500l3.500 4 3.500-4z" fill="#000" />
            </svg>
          </button>
        </div>
        <div className="flex h-5 min-w-0 flex-1 items-center border border-[#606060] bg-white pr-1">
          <input
            aria-label="Source file"
            defaultValue={'"<CommonDocumentsDir>\\DBSL\\Demo\\Text Files\\Sales.csv"'}
            className="min-w-0 flex-1 pl-1 outline-none"
          />
          <button type="button" aria-label="Browse">
            <BrowseIcon />
          </button>
        </div>
      </div>
      <div className="flex h-[126px] pl-1">
        <div className="min-w-0 flex-1 overflow-hidden">
          <PreviewTable />
        </div>
        <VScroll before="h-0.5" thumb="h-[15px]" mark={false} />
      </div>
      <div className="flex bg-[#f0f0f0] pl-1 pr-4">
        <HScroll before="w-0.5" thumb="w-[15px]" mark={false} />
      </div>
    </section>
  )
}

/* ---------- editor ---------- */

function NavButton({ label, path }: { label: string; path: string }) {
  return (
    <button
      type="button"
      aria-label={label}
      className="flex h-4 w-[17px] items-center justify-center rounded bg-[linear-gradient(#eef2e4_10px,#c1dcc4_11px)]"
    >
      <svg width="9" height="9" viewBox="0 0 9 9" aria-hidden="true">
        <path d={path} fill="#fff" stroke="#85511c" />
      </svg>
    </button>
  )
}

function Editor() {
  return (
    <section className="flex min-w-0 flex-1 flex-col border-b-2 border-l border-r border-[#e8eed8] pb-[3px] pl-px">
      <div className="flex h-7 shrink-0 items-end pl-1.5 pr-[7px]">
        <button type="button" className="mb-1 flex items-center gap-1">
          <ImportIcon />
          Categories
        </button>
        <span className="mb-1 ml-2 flex">
          <CloseTab label="Close Categories" />
        </span>
        <div className="ml-4 flex">
          <SlantTab>
            <button type="button" className="flex items-center gap-1">
              <ImportIcon />
              Pivot
            </button>
            <span className="ml-2 flex">
              <CloseTab label="Close Pivot" />
            </span>
          </SlantTab>
        </div>
        <span className="mb-1 ml-auto flex">
          <NavButton label="Tab list" path="M1 3l1.500-1.500 2 2 2-2L8 3v1.500L4.500 8 1 4.500z" />
        </span>
      </div>
      <div className="flex h-[31px] shrink-0 items-center bg-[linear-gradient(90deg,#eedfa8_239px,#e8eed8_239px)]">
        <div className="flex flex-1 pl-[3px]">
          <Toolbar>
            <ToolButton label="Properties"><PropsIcon /></ToolButton>
            <Sep />
            <ToolButton label="Open"><OpenIcon /></ToolButton>
            <button type="button" aria-label="Open recent" className="flex w-3 justify-center">
              <svg width="6" height="4" viewBox="0 0 6 4" aria-hidden="true">
                <path d="M0 0h6L3 4z" fill="#000" />
              </svg>
            </button>
            <ToolButton label="Save"><SaveIcon /></ToolButton>
            <ToolButton label="Save as"><SaveAsIcon /></ToolButton>
            <ToolButton label="Save to repository"><SaveDbIcon /></ToolButton>
            <Sep />
            <ToolButton label="Refresh"><RefreshIcon /></ToolButton>
            <ToolButton label="Verify"><ChecksIcon /></ToolButton>
            <ToolButton label="Inspect"><PanIcon /></ToolButton>
            <ToolButton label="Clear"><BroomIcon /></ToolButton>
            <ToolButton label="Auto map" active><PageArrowsIcon /></ToolButton>
            <Sep />
            <ToolButton label="Run"><GoIcon /></ToolButton>
            <Sep />
            <ToolButton label="View schedule"><CalendarIcon badge="find" /></ToolButton>
            <ToolButton label="Add schedule"><CalendarIcon badge="add" /></ToolButton>
            <ToolButton label="Run schedule"><CalendarIcon badge="go" /></ToolButton>
          </Toolbar>
        </div>
        <div className="h-full w-6 bg-[#ececec]" />
      </div>
      <div className="flex h-[27px] shrink-0 items-end pl-1 pr-2">
        <SlantTab>
          <button type="button" className="flex items-center gap-1">
            <TargetIcon />
            Target Table: Total_Sales
          </button>
        </SlantTab>
        <div className="mb-0.5 ml-2 flex gap-6">
          <button type="button" className="flex items-center gap-1"><SqlIcon />SQL</button>
          <button type="button" className="flex items-center gap-1"><TemplateIcon />Template</button>
          <button type="button" className="flex items-center gap-1"><LogIcon />Transformation Log</button>
        </div>
        <span className="mb-1 ml-auto flex gap-1">
          <NavButton label="Previous tab" path="M6 1L7.500 2.500l-2 2 2 2L6 8H4.500L1 4.500 4.500 1z" />
          <NavButton label="Next tab" path="M3 1L1.500 2.500l2 2-2 2L3 8h1.500L8 4.500 4.500 1z" />
        </span>
      </div>
      <div className="mr-0.5 flex min-h-0 flex-1 flex-col bg-[#e8eed8] pb-0.5 pl-[3px] pr-0.5 pt-0.5">
        <div className="flex min-h-0 flex-1">
          <div className="flex min-w-0 flex-1 flex-col border-l border-t border-[#888]">
            <div className="flex min-h-0 flex-1">
              <div className="relative min-w-0 flex-1 bg-white pr-0.5">
                <FieldTable />
                <div className="pointer-events-none absolute bottom-[69px] left-[83px] flex items-center gap-1 text-[19px] font-bold leading-6 text-[#c8cacb] [font-family:'DejaVu_Sans',sans-serif]">
                  download
                  <span className="flex h-6 w-6 items-center justify-center rounded-full bg-[#d8dadb] text-sm text-white">3k</span>
                </div>
              </div>
              <VScroll before="h-0.5" thumb="h-[115px]" />
            </div>
            <div className="flex bg-[#f0f0f0] pr-4">
              <HScroll before="w-0.5" thumb="w-[60px]" />
            </div>
          </div>
          <MappingForm />
        </div>
        <div className="flex h-1 shrink-0 justify-center bg-[#b3d88f]">
          <span className="mt-px h-0.5 w-[34px] bg-[repeating-linear-gradient(90deg,#000_0,#000_2px,#e8eed8_2px,#e8eed8_4px)]" />
        </div>
        <PreviewPane />
      </div>
    </section>
  )
}

/* ---------- window ---------- */

function TitleBar() {
  return (
    <header className="flex h-[29px] shrink-0 items-start justify-between border-t border-[#ddd] bg-[linear-gradient(90deg,#a8a8a8_0,#bcbcbc_160px,#505254_215px,#484848_430px,#6c6c6c_500px,#777_590px,#555_690px,#606060_740px,#a8a8a8_800px,#bbb_100%)] pl-2 pr-[7px]">
      <h1 className="flex h-[26px] items-center gap-1 text-[12px] font-normal text-black">
        <AppIcon />
        Visual Importer Enterprise
      </h1>
      <div className="flex h-[19px] overflow-hidden rounded-b border border-t-0 border-[#444] bg-gradient-to-b from-[#c8c8c8] via-[#999] to-[#aaa]">
        <button type="button" aria-label="Minimize" className="flex w-7 items-center justify-center border-r border-[#555]">
          <svg width="12" height="5" viewBox="0 0 12 5" aria-hidden="true">
            <path d="M.5.5h11v4H.5z" fill="#fff" stroke="#444" />
          </svg>
        </button>
        <button type="button" aria-label="Maximize" className="flex w-[27px] items-center justify-center border-r border-[#555]">
          <svg width="12" height="10" viewBox="0 0 12 10" aria-hidden="true">
            <path d="M.5.5h11v9H.5z" fill="#fff" stroke="#444" />
            <path d="M4 3.500h4v3H4z" fill="#999" stroke="#444" />
          </svg>
        </button>
        <button type="button" aria-label="Close window" className="flex w-[46px] items-center justify-center bg-[linear-gradient(#e8a498_0,#d07060_9px,#b82a18_10px,#d8684c_100%)]">
          <svg width="12" height="10" viewBox="0 0 12 10" aria-hidden="true">
            <path d="M2 1l8 8M10 1L2 9" stroke="#444" strokeWidth="4" />
            <path d="M2 1l8 8M10 1L2 9" stroke="#fff" strokeWidth="2.400" />
          </svg>
        </button>
      </div>
    </header>
  )
}

function MenuBar() {
  return (
    <div className="flex h-[29px] shrink-0 items-center border-t border-[#5a6068] bg-[linear-gradient(90deg,#eedfa8_357px,#e8eed8_357px)] text-[12px]">
      <span className="flex pl-[7px]"><Grip /></span>
      <nav className="flex flex-1 gap-2 pl-1.5">
        <button type="button"><u>F</u>ile</button>
        <button type="button"><u>V</u>iew</button>
        <button type="button"><u>H</u>elp</button>
      </nav>
      <div className="h-full w-10 bg-[#ececec]" />
    </div>
  )
}

function StatusBar() {
  const cell = 'flex h-full items-center border-r border-[#e2eecc] px-[5px]'
  return (
    <footer className="flex h-5 shrink-0 items-center bg-[linear-gradient(#c1dcc4_4px,#b3d88f_5px)] text-[12px]">
      <span className={clsx(cell, 'w-[71px]')}>Connected</span>
      <span className={clsx(cell, 'w-[53px]')}>Waiting</span>
      <span className="h-full flex-1 border-r border-[#e2eecc]" />
      {['0', '0', '0'].map((v, i) => (
        <span key={i} className={clsx(cell, 'w-5 justify-center')}>{v}</span>
      ))}
      {['00:00:00', '00:00:00', '00:00:00'].map((v, i) => (
        <span key={i} className={clsx(cell, 'w-[54px] justify-center')}>{v}</span>
      ))}
      <span className="ml-px flex h-full items-center bg-[linear-gradient(#a8945c_5px,#666_6px)]">
        <span className="ml-px flex h-[15px] w-[68px] items-center justify-center border border-[#2468b8] text-white">0%</span>
        <svg width="18" height="18" viewBox="0 0 18 18" aria-hidden="true">
          <path d="M13 6h3v3h-3zM9 10h3v3H9zM13 10h3v3h-3zM5 14h3v3H5zM9 14h3v3H9zM13 14h3v3h-3z" fill="#b3d88f" />
        </svg>
      </span>
    </footer>
  )
}

export default function App() {
  return (
    <div className="flex h-screen w-full flex-col overflow-hidden rounded-t-md border-t border-black bg-[linear-gradient(#b8b8b8_0,#b0a8a8_188px,#6e6a6a_192px,#8c8686_100%)] text-[11px] leading-4 text-black [font-family:Roboto,sans-serif]">
      <TitleBar />
      <div className="flex min-h-0 flex-1 border-b-2 border-l border-r border-black px-[7px] pb-[5px]">
        <div className="flex min-w-0 flex-1 flex-col bg-[#b3d88f]">
          <MenuBar />
          <MainTabs />
          <main className="flex min-h-0 flex-1 border-t-2 border-[#e8eed8] pb-1 pl-1 pr-[3px]">
            <RepositoryPane />
            <div className="flex w-[5px] shrink-0 items-center justify-center">
              <span className="h-[34px] w-0.5 bg-[repeating-linear-gradient(#000_0,#000_2px,#e8eed8_2px,#e8eed8_4px)]" />
            </div>
            <Editor />
          </main>
          <div className="h-0.5 shrink-0 bg-[#e8eed8]" />
          <StatusBar />
        </div>
      </div>
    </div>
  )
}
